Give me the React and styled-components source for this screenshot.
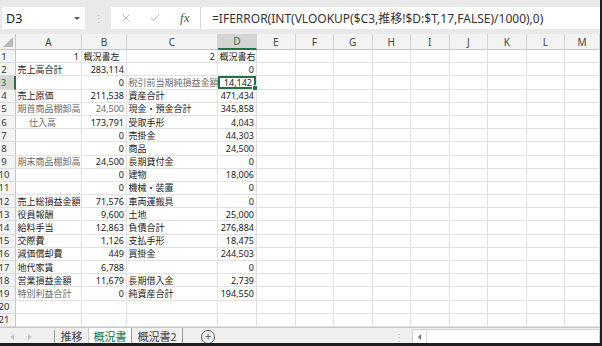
import React from 'react'
import styled, { createGlobalStyle } from 'styled-components'
import { X, Check } from 'lucide-react'

const GREEN = '#217346'

const GlobalStyle = createGlobalStyle`
  html, body {
    margin: 0;
    padding: 0;
    background: #fff;
  }
  body {
    font-family: "Noto Sans", "Noto Sans CJK JP", sans-serif;
  }
`

const Window = styled.div`
  width: 602px;
  height: 346px;
  box-sizing: border-box;
  border-right: 2px solid #1e1e1e;
  border-bottom: 3px solid #1e1e1e;
  display: flex;
  flex-direction: column;
  background: #fff;
  overflow: hidden;
`

const FormulaRow = styled.div`
  flex: none;
  height: 34px;
  box-sizing: border-box;
  padding: 7px 0 0 2px;
  background: #e9e9e9;
  display: flex;
  align-items: flex-start;
`

const NameBox = styled.div`
  width: 83px;
  height: 22px;
  box-sizing: border-box;
  padding: 0 5px 0 4px;
  background: #fff;
  display: flex;
  align-items: center;
  justify-content: space-between;
  font-size: 12.5px;
  color: #222;
`

const Caret = styled.span`
  width: 0;
  height: 0;
  border-left: 3px solid transparent;
  border-right: 3px solid transparent;
  border-top: 3px solid #555;
`

const Grip = styled.div`
  width: 26px;
  height: 22px;
  display: flex;
  align-items: center;
  justify-content: center;
  color: #b5b5b5;
  font-size: 11px;
`

const FormulaBox = styled.div`
  flex: 1;
  height: 22px;
  background: #fff;
  display: flex;
  align-items: center;
`

const Buttons = styled.div`
  width: 90px;
  height: 100%;
  box-sizing: border-box;
  border-right: 1px solid #d6d6d6;
  display: grid;
  grid-template-columns: repeat(3, 29.5px);
  justify-items: center;
  align-items: center;
  color: #9a9a9a;
`

const Fx = styled.span`
  font-family: "Liberation Serif", serif;
  font-style: italic;
  font-size: 13px;
  color: #555;
`

const FormulaText = styled.div`
  padding-left: 11px;
  font-size: 12px;
  color: #333;
  white-space: nowrap;
`

const Sheet = styled.div`
  flex: none;
  display: grid;
  grid-template-columns: 16px 66px 45px 91px 39px repeat(8, 38.5px) 1fr;
  grid-template-rows: 16px repeat(21, 13.2px);
`

const Corner = styled.div`
  position: relative;
  background: #f3f3f3;
  border-right: 1px solid #c6c6c6;
  border-bottom: 1px solid #c6c6c6;
  box-sizing: border-box;

  &::after {
    content: '';
    position: absolute;
    right: 2px;
    bottom: 2px;
    border-left: 10px solid transparent;
    border-bottom: 10px solid #b8b8b8;
  }
`

const ColHead = styled.div`
  box-sizing: border-box;
  background: ${p => (p.$active ? '#d4d4d4' : '#f3f3f3')};
  border-right: 1px solid #d4d4d4;
  border-bottom: ${p => (p.$active ? `2px solid ${GREEN}` : '1px solid #c6c6c6')};
  color: ${p => (p.$active ? GREEN : '#444')};
  font-size: 10px;
  display: flex;
  align-items: center;
  justify-content: center;
`

const RowHead = styled.div`
  box-sizing: border-box;
  background: ${p => (p.$active ? '#d4d4d4' : '#f3f3f3')};
  border-right: ${p => (p.$active ? `2px solid ${GREEN}` : '1px solid #c6c6c6')};
  border-bottom: 1px solid #dcdcdc;
  color: ${p => (p.$active ? GREEN : '#333')};
  font-size: 9.5px;
  padding-right: 7px;
  display: flex;
  align-items: center;
  justify-content: center;
  white-space: nowrap;
`

const Cell = styled.div`
  position: relative;
  box-sizing: border-box;
  border-right: 1px solid #e1e1e1;
  border-bottom: 1px solid #e1e1e1;
  padding: 0 ${p => (p.$selected ? '4px' : p.$right ? '2px' : '0')} 0
    ${p => (p.$indent ? '13px' : '1.5px')};
  display: flex;
  align-items: center;
  justify-content: ${p => (p.$right ? 'flex-end' : 'flex-start')};
  font-size: 9px;
  color: ${p => (p.$muted ? '#6a6a6a' : '#1a1a1a')};
  white-space: nowrap;
  box-shadow: ${p => (p.$selected ? `inset 0 0 0 2px ${GREEN}` : 'none')};

  &::after {
    content: '';
    display: ${p => (p.$selected ? 'block' : 'none')};
    position: absolute;
    right: -2px;
    bottom: -2px;
    width: 4px;
    height: 4px;
    background: ${GREEN};
    border: 1px solid #fff;
    z-index: 1;
  }
`

const TabBar = styled.div`
  flex: 1;
  display: flex;
  align-items: stretch;
  background: #efefef;
  border-top: 1px solid #c8c8c8;
  font-family: "Noto Sans CJK JP", sans-serif;
`

const NavArrows = styled.div`
  width: 55px;
  display: flex;
  align-items: center;
  padding-left: 10px;
  gap: 14px;
  box-sizing: border-box;
  border-right: 1px solid #9a9a9a;
  margin: 2px 0;
`

const Arrow = styled.span`
  width: 0;
  height: 0;
  border-top: 3px solid transparent;
  border-bottom: 3px solid transparent;
  ${p => (p.$left ? 'border-right: 4px solid #c4c4c4;' : 'border-left: 4px solid #c4c4c4;')}
`

const Tab = styled.div`
  width: ${p => p.$w}px;
  box-sizing: border-box;
  display: flex;
  align-items: center;
  justify-content: center;
  font-size: 11px;
  color: ${p => (p.$active ? GREEN : '#444')};
  background: ${p => (p.$active ? '#fff' : 'transparent')};
  border-bottom: ${p => (p.$active ? `2px solid ${GREEN}` : '2px solid transparent')};
  border-left: ${p => (p.$active ? '1px solid #c8c8c8' : 'none')};
  border-right: ${p => (p.$divider ? '1px solid #9a9a9a' : 'none')};
`

const AddButton = styled.div`
  margin: auto 0 auto 18px;
  width: 12px;
  height: 12px;
  border: 1px solid #666;
  border-radius: 50%;
  display: flex;
  align-items: center;
  justify-content: center;
  color: #555;
  font-size: 11px;
  line-height: 1;
`

const Spacer = styled.div`
  flex: 1;
  display: flex;
  align-items: center;
  justify-content: flex-end;
  padding-right: 8px;
  color: #b5b5b5;
  font-size: 10px;
`

const Scrollbar = styled.div`
  width: 188px;
  margin: 1px 0;
  background: #fff;
  border: 1px solid #d0d0d0;
  box-sizing: border-box;
  display: flex;
  align-items: center;
`

const ScrollArrow = styled.div`
  width: 13px;
  height: 100%;
  display: flex;
  align-items: center;
  justify-content: center;
  border-right: 1px solid #d8d8d8;

  &::before {
    content: '';
    border-top: 3px solid transparent;
    border-bottom: 3px solid transparent;
    border-right: 3px solid #777;
  }
`

const columns = ['A', 'B', 'C', 'D', 'E', 'F', 'G', 'H', 'I', 'J', 'K', 'L', 'M']

const rows = [
  ['1', '概況書左', '2', '概況書右'],
  ['売上高合計', '283,114', '', '0'],
  ['', '0', '税引前当期純損益金額', '14,142'],
  ['売上原価', '211,538', '資産合計', '471,434'],
  ['期首商品棚卸高', '24,500', '現金・預金合計', '345,858'],
  ['仕入高', '173,791', '受取手形', '4,043'],
  ['', '0', '売掛金', '44,303'],
  ['', '0', '商品', '24,500'],
  ['期末商品棚卸高', '24,500', '長期貸付金', '0'],
  ['', '0', '建物', '18,006'],
  ['', '0', '機械・装置', '0'],
  ['売上総損益金額', '71,576', '車両運搬具', '0'],
  ['役員報酬', '9,600', '土地', '25,000'],
  ['給料手当', '12,863', '負債合計', '276,884'],
  ['交際費', '1,126', '支払手形', '18,475'],
  ['減価償却費', '449', '買掛金', '244,503'],
  ['地代家賃', '6,788', '', '0'],
  ['営業損益金額', '11,679', '長期借入金', '2,739'],
  ['特別利益合計', '0', '純資産合計', '194,550'],
  ['', '', '', ''],
  ['', '', '', ''],
]

const muted = new Set(['A5', 'A6', 'A9', 'A19', 'C3', 'B5'])
const indented = new Set(['A6'])
const isNumber = v => /^[\d,]+$/.test(v)

export default function App() {
  return (
    <Window>
      <GlobalStyle />
      <FormulaRow>
        <NameBox>
          D3
          <Caret />
        </NameBox>
        <Grip>⋮</Grip>
        <FormulaBox>
          <Buttons>
            <X size={12} strokeWidth={1.4} />
            <Check size={12} strokeWidth={1.4} />
            <Fx>fx</Fx>
          </Buttons>
          <FormulaText>=IFERROR(INT(VLOOKUP($C3,推移!$D:$T,17,FALSE)/1000),0)</FormulaText>
        </FormulaBox>
      </FormulaRow>

      <Sheet>
        <Corner />
        {columns.map(c => (
          <ColHead key={c} $active={c === 'D'}>
            {c}
          </ColHead>
        ))}
        {rows.map((row, r) => {
          const n = r + 1
          return (
            <React.Fragment key={n}>
              <RowHead $active={n === 3}>{n}</RowHead>
              {columns.map((c, i) => {
                const v = row[i] || ''
                const id = c + n
                return (
                  <Cell
                    key={id}
                    $right={isNumber(v)}
                    $muted={muted.has(id)}
                    $indent={indented.has(id)}
                    $selected={id === 'D3'}
                  >
                    {v}
                  </Cell>
                )
              })}
            </React.Fragment>
          )
        })}
      </Sheet>

      <TabBar>
        <NavArrows>
          <Arrow $left />
          <Arrow />
        </NavArrows>
        <Tab $w={33}>推移</Tab>
        <Tab $w={44} $active $divider>概況書</Tab>
        <Tab $w={51} $divider>概況書2</Tab>
        <AddButton>+</AddButton>
        <Spacer>⋮</Spacer>
        <Scrollbar>
          <ScrollArrow />
        </Scrollbar>
      </TabBar>
    </Window>
  )
}
